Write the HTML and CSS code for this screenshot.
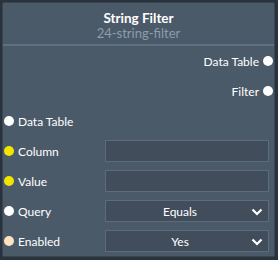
FILE: index.html
```html
<!DOCTYPE html>
<html lang="en">
<head>
  <meta charset="UTF-8" />
  <title>String Filter</title>
  <link rel="stylesheet" href="styles.css">
</head>
<body>
  <div class="node">
    <div class="node-header">
      <div class="node-title">String Filter</div>
      <div class="node-id">24-string-filter</div>
    </div>
    <div class="row output">
      <span class="label">Data Table</span><span class="socket"></span>
    </div>
    <div class="row output">
      <span class="label">Filter</span><span class="socket"></span>
    </div>
    <div class="row">
      <span class="socket"></span><span class="label">Data Table</span>
    </div>
    <div class="row">
      <span class="socket yellow"></span><span class="label">Column</span>
      <input class="field" type="text" />
    </div>
    <div class="row">
      <span class="socket yellow"></span><span class="label">Value</span>
      <input class="field" type="text" />
    </div>
    <div class="row">
      <span class="socket"></span><span class="label">Query</span>
      <div class="field select">
        <span>Equals</span>
        <svg viewBox="0 0 12 8"><path d="M1.5 1.5L6 6L10.5 1.5"/></svg>
      </div>
    </div>
    <div class="row">
      <span class="socket peach"></span><span class="label">Enabled</span>
      <div class="field select">
        <span>Yes</span>
        <svg viewBox="0 0 12 8"><path d="M1.5 1.5L6 6L10.5 1.5"/></svg>
      </div>
    </div>
  </div>
</body>
</html>
```

FILE: styles.css
```css
* { box-sizing: border-box; }
body {
  margin: 0;
  background: #29323d;
  font-family: 'Lato', 'Open Sans', sans-serif;
  color: #ffffff;
}
.node {
  margin: 2px;
  width: 273px;
  height: 255px;
  background: #4b5a69;
  border: 1px solid #3a4552;
  border-radius: 2px;
}
.node-header {
  height: 43px;
  border-bottom: 2px solid #5f7082;
  text-align: center;
  padding-top: 8px;
}
.node-title {
  font-size: 13.5px;
  font-weight: 700;
  line-height: 15px;
}
.node-id {
  font-size: 13px;
  color: #8e9cab;
  line-height: 14px;
}
.row {
  height: 30px;
  display: flex;
  align-items: center;
  padding: 0 5px 0 1px;
  font-size: 12px;
}
.row.output {
  justify-content: flex-end;
  padding-right: 1px;
}
.socket {
  width: 10px;
  height: 10px;
  border-radius: 50%;
  background: #ffffff;
  flex-shrink: 0;
}
.socket.yellow { background: #f2e500; }
.socket.peach { background: #fde2c4; }
.label {
  margin-left: 4px;
  flex: 1;
}
.output .label {
  flex: none;
  margin-left: 0;
  margin-right: 4px;
}
.field {
  width: 164px;
  height: 22px;
  background: #414d5a;
  border: 1px solid #5d6b7b;
  color: #fff;
  font: inherit;
  outline: none;
}
.select {
  display: flex;
  align-items: center;
  justify-content: center;
  position: relative;
  font-size: 12px;
}
.select span {
  margin-left: -14px;
}
.select svg {
  position: absolute;
  right: 5px;
  top: 7px;
  width: 12px;
  height: 8px;
  fill: none;
  stroke: #ffffff;
  stroke-width: 2.2;
}
```
